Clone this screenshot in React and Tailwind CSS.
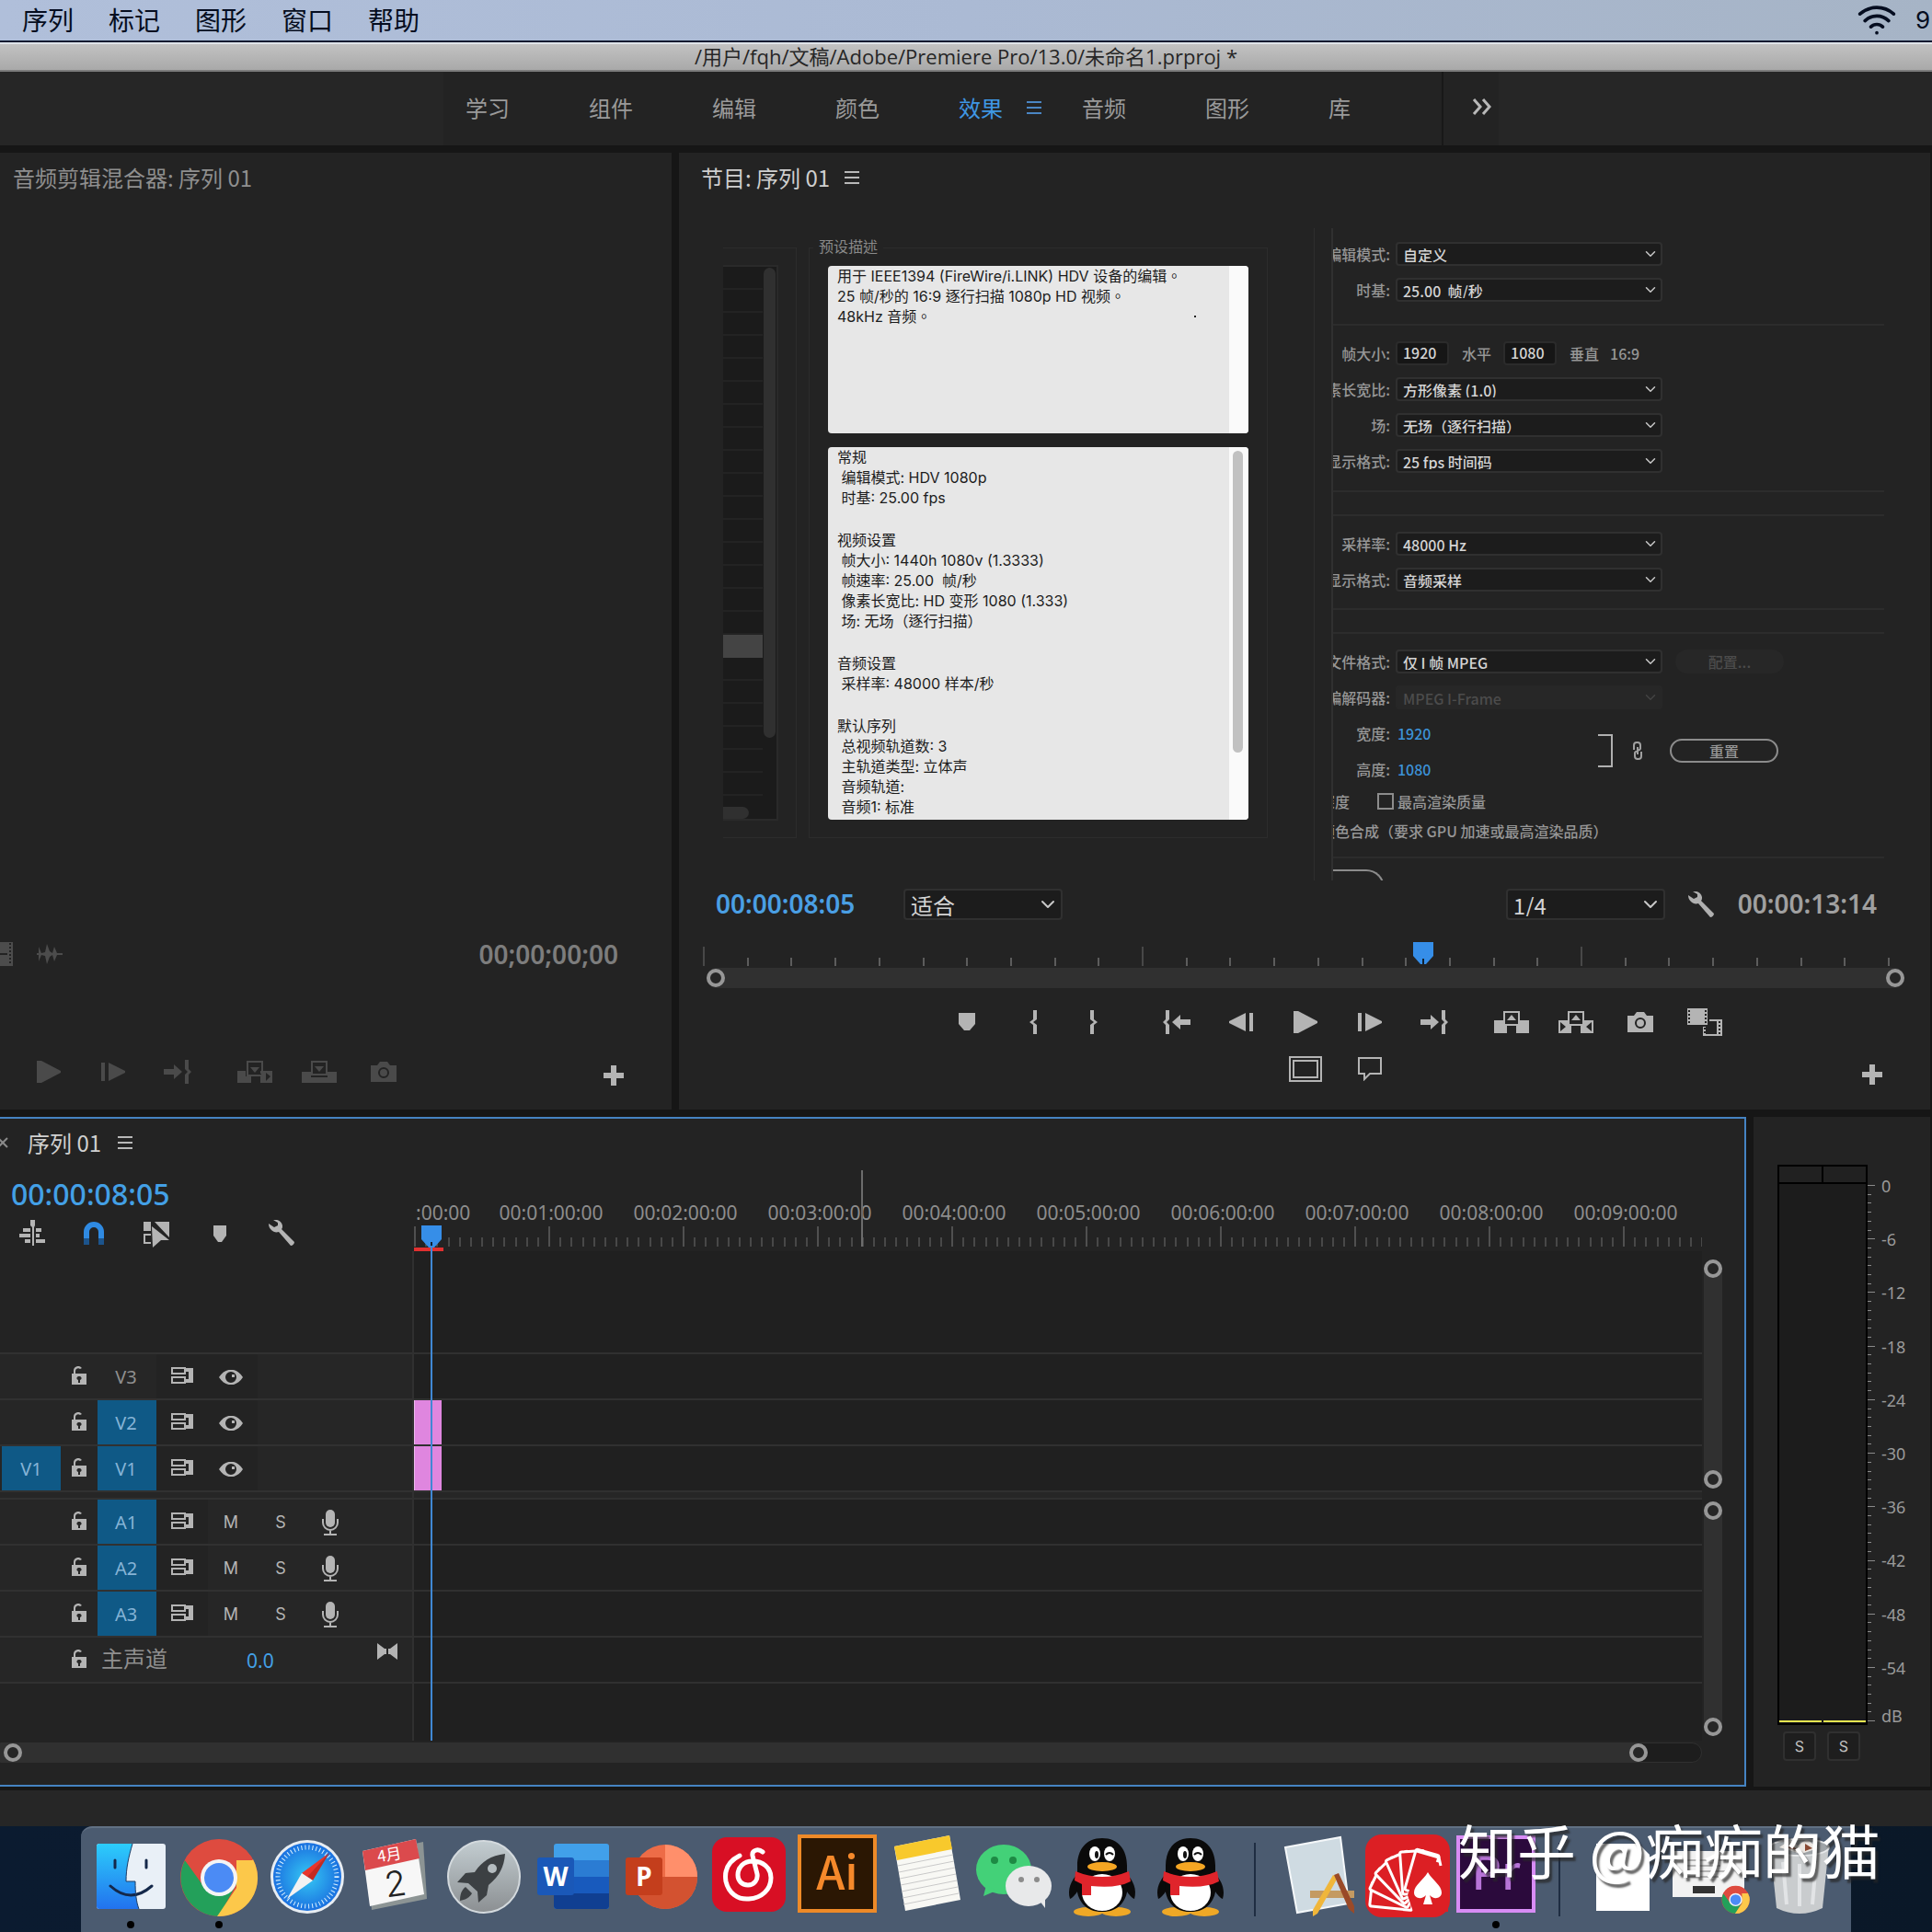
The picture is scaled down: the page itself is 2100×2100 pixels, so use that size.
import { useState } from "react";
import { ChevronDown, Wifi } from "lucide-react";

const menus = ["序列", "标记", "图形", "窗口", "帮助"];
const workspaces = ["学习", "组件", "编辑", "颜色", "效果", "音频", "图形", "库"];

const presetInfo = [
  "常规",
  " 编辑模式: HDV 1080p",
  " 时基: 25.00 fps",
  "",
  "视频设置",
  " 帧大小: 1440h 1080v (1.3333)",
  " 帧速率: 25.00  帧/秒",
  " 像素长宽比: HD 变形 1080 (1.333)",
  " 场: 无场（逐行扫描）",
  "",
  "音频设置",
  " 采样率: 48000 样本/秒",
  "",
  "默认序列",
  " 总视频轨道数: 3",
  " 主轨道类型: 立体声",
  " 音频轨道:",
  " 音频1: 标准",
];

/* ---------- small shared pieces ---------- */

function Svg({ w, h, children, className = "" }) {
  return (
    <svg width={w} height={h} viewBox={`0 0 ${w} ${h}`} fill="currentColor" className={`block shrink-0 ${className}`} aria-hidden="true">
      {children}
    </svg>
  );
}

function MenuLines({ className = "" }) {
  return (
    <Svg w={16} h={16} className={className}>
      <path d="M0 1h16v2H0zM0 7h16v2H0zM0 13h16v2H0z" />
    </Svg>
  );
}

function Plus() {
  return (
    <button type="button" aria-label="添加按钮" className="text-[#b4b4b4]">
      <Svg w={22} h={22}>
        <path d="M8 0h6v8h8v6h-8v8H8v-8H0V8h8z" />
      </Svg>
    </button>
  );
}

function Ring() {
  return <span className="block size-5 shrink-0 rounded-full border-4 border-[#979797] bg-[#262626]" />;
}

function Wrench() {
  return (
    <Svg w={28} h={28}>
      <path d="M5 0c4-1 9 1 10 6 0 2 0 3-1 4l14 14c0 2-2 4-4 4L11 13c-3 1-6 0-8-2C1 9 0 7 0 4l6 4 4-2 0-3z" />
    </Svg>
  );
}

function Marker() {
  return (
    <Svg w={18} h={20}>
      <path d="M0 0h18v12l-6 7H6L0 12z" />
    </Svg>
  );
}

function Playhead() {
  return (
    <Svg w={22} h={24} className="text-[#368ee8]">
      <path d="M0 0h22v15l-8 9H8L0 15z" />
      <path d="M10 18h2v6h-2z" fill="#102030" />
    </Svg>
  );
}

function Play() {
  return (
    <Svg w={26} h={24}>
      <path d="M0 0h5l21 11v2L5 24H0z" />
    </Svg>
  );
}

function StepForward() {
  return (
    <Svg w={26} h={20}>
      <path d="M0 0h4v20H0zM8 0l18 9v2L8 20z" />
    </Svg>
  );
}

function StepBack() {
  return (
    <Svg w={26} h={20}>
      <path d="M22 0h4v20h-4zM18 0L0 9v2l18 9z" />
    </Svg>
  );
}

function BraceOpen() {
  return (
    <Svg w={10} h={26}>
      <path d="M4 0h4v10l-4 3 4 3v10H4V16L0 13l4-3z" />
    </Svg>
  );
}

function BraceClose() {
  return (
    <Svg w={10} h={26}>
      <path d="M2 0h4v10l4 3-4 3v10H2V16l4-3-4-3z" />
    </Svg>
  );
}

function GoIn() {
  return (
    <Svg w={30} h={26}>
      <path d="M3 0h4v10l-3 3 3 3v10H3V16l-3-3 3-3zM10 13l9-8v5h11v6H19v5z" />
    </Svg>
  );
}

function GoOut() {
  return (
    <Svg w={30} h={26}>
      <path d="M23 0h4v10l3 3-3 3v10h-4V16l3-3-3-3zM20 13l-9-8v5H0v6h11v5z" />
    </Svg>
  );
}

function Camera() {
  return (
    <Svg w={28} h={22}>
      <path fillRule="evenodd" d="M0 4h7l3-4h8l3 4h7v18H0zM14 6a6 6 0 1 0 0 12 6 6 0 0 0 0-12zM14 8a4 4 0 1 1 0 8 4 4 0 0 1 0-8z" />
    </Svg>
  );
}

function Insert() {
  return (
    <Svg w={38} h={24}>
      <path d="M0 11h9v6h6v7H0zM25 11h13v13H25v-7h3v-3h-3z" />
      <path d="M11 1h16v15H11z" fill="none" stroke="currentColor" strokeWidth="2" />
      <path d="M14 7h10l-5 6z" />
      <path d="M31 13l5 4-5 5z" fill="#232323" />
    </Svg>
  );
}

function Overwrite() {
  return (
    <Svg w={38} h={24}>
      <path d="M0 12h10v6h18v-6h10v12H0z" />
      <path d="M11 1h16v14H11z" fill="none" stroke="currentColor" strokeWidth="2" />
      <path d="M14 6h10l-5 6z" />
    </Svg>
  );
}

function Lift() {
  return (
    <Svg w={38} h={24}>
      <path d="M0 10h10v6h4v8H0zM28 10h10v14H24v-8h4z" />
      <path d="M11 1h16v14H11z" fill="none" stroke="currentColor" strokeWidth="2" />
      <path d="M14 10h10l-5-6z" />
    </Svg>
  );
}

function Extract() {
  return (
    <Svg w={38} h={24}>
      <path d="M0 10h10v6h4v8H0zM28 10h10v14H24v-8h4z" />
      <path d="M11 1h16v14H11z" fill="none" stroke="currentColor" strokeWidth="2" />
      <path d="M14 10h10l-5-6z" />
      <path d="M2 12l6 5-6 5zM36 12l-6 5 6 5z" fill="#232323" />
    </Svg>
  );
}

function Compare() {
  return (
    <Svg w={38} h={30}>
      <path d="M0 0h22v18H0z" />
      <path d="M2 2v15M20 2v15" stroke="#232323" strokeWidth="2" strokeDasharray="2 2" />
      <path d="M17 20h3v8h12V14h-8v-2h14v18H17z" />
      <path d="M35 14v15M19 21v8" stroke="#232323" strokeWidth="2" strokeDasharray="2 2" />
    </Svg>
  );
}

function SafeMargins() {
  return (
    <Svg w={36} h={28}>
      <path d="M1 1h34v26H1zM5 5h26v18H5z" fill="none" stroke="currentColor" strokeWidth="2" />
    </Svg>
  );
}

function Comment() {
  return (
    <Svg w={26} h={26}>
      <path d="M1 1h24v17H13l-6 6v-6H1z" fill="none" stroke="currentColor" strokeWidth="2" />
    </Svg>
  );
}

function IconButton({ label, children, className = "" }) {
  return (
    <button type="button" aria-label={label} className={`flex h-10 w-[70px] shrink-0 items-center justify-center ${className}`}>
      {children}
    </button>
  );
}

function Dropdown({ label, value, className = "", size = 18, disabled = false }) {
  return (
    <span className={`relative block shrink-0 ${className}`}>
      <select
        aria-label={label}
        disabled={disabled}
        className="h-full w-full appearance-none rounded-sm border-2 border-[#303030] bg-[#1c1c1c] pb-0.5 pl-1.5 text-[#d4d4d4] disabled:border-[#272727] disabled:bg-[#272727] disabled:text-[#4c4c4c]"
      >
        <option>{value}</option>
      </select>
      <ChevronDown
        size={size}
        className={disabled ? "pointer-events-none absolute top-1/2 right-1 -translate-y-1/2 text-[#444]" : "pointer-events-none absolute top-1/2 right-1 -translate-y-1/2 text-[#c8c8c8]"}
      />
    </span>
  );
}

/* ---------- top bars ---------- */

function TopBars() {
  const [active, setActive] = useState("效果");
  return (
    <header>
      <div className="flex h-[46px] items-center justify-between overflow-hidden border-b-2 border-[#0d1a30] bg-linear-to-r from-[#b0bfda] via-[#abbad4] to-[#a6b4c6] pb-0.5 pl-6 text-[28px] text-[#050d20]">
        <nav className="flex gap-[38px]">
          {menus.map((m) => (
            <button type="button" key={m}>{m}</button>
          ))}
        </nav>
        <div className="flex w-[82px] shrink-0 items-center gap-5">
          <Wifi size={44} className="shrink-0" />
          <span className="font-['Inter','Noto_Sans_CJK_SC',sans-serif] text-[26px]">9</span>
        </div>
      </div>
      <div className="flex h-8 items-center justify-center border-t-2 border-b-2 border-t-[#dfe3e8] border-b-[#7c7c7c] bg-linear-to-b from-[#c2c2c2] to-[#a9a9a9] pb-0.5 text-[22px] text-[#262626]">
        <h1 className="font-['Open_Sans','Noto_Sans_CJK_SC',sans-serif]">/用户/fqh/文稿/Adobe/Premiere Pro/13.0/未命名1.prproj *</h1>
      </div>
      <div className="flex h-20 bg-[#262626] pl-[482px] text-2xl text-[#9a9a9a]">
        <nav className="flex w-[1087px] items-center overflow-hidden border-r-2 border-[#181818] bg-[#232323] pb-0.5 pl-6">
          {workspaces.map((name) => (
            <button
              type="button"
              key={name}
              onClick={() => setActive(name)}
              className={name === active ? "flex w-[134px] shrink-0 items-center gap-[26px] text-[#3f97e4]" : "flex w-[134px] shrink-0 items-center"}
            >
              {name}
              {name === active && <MenuLines className="text-[#4a86c4]" />}
            </button>
          ))}
        </nav>
        <button type="button" aria-label="更多工作区" className="flex w-[60px] items-center justify-center bg-[#232323] pb-1 pl-6 text-[#b8b8b8]">
          <Svg w={22} h={18}>
            <path d="M2 1l7 8-7 8M12 1l7 8-7 8" fill="none" stroke="currentColor" strokeWidth="3" />
          </Svg>
        </button>
      </div>
    </header>
  );
}

/* ---------- audio clip mixer ---------- */

function MixerPanel() {
  return (
    <section className="flex w-[730px] shrink-0 flex-col bg-[#232323]">
      <h2 className="flex h-14 items-center pb-0.5 pl-3.5 text-2xl text-[#8f8f8f]">音频剪辑混合器: 序列 01</h2>
      <div className="mt-auto flex h-10 items-center pb-0.5 text-[#4c4c4c]">
        <Svg w={14} h={26}>
          <path d="M0 0h14v26H0z" />
          <path d="M11 1v24" stroke="#232323" strokeWidth="2" strokeDasharray="2 2" />
          <path d="M0 12h8v2H0z" fill="#232323" />
        </Svg>
        <Svg w={28} h={22} className="ml-[26px]">
          <path d="M0 10h2V3l3 7 4-1 2-9 3 8 3 2 2-7 3 7h6v2h-6l-3 7-2-7-3 2-3 8-2-9-4-1-3 7v-7H0z" />
        </Svg>
        <span className="mr-[58px] ml-auto font-['Noto_Sans',sans-serif] text-[28px] font-semibold text-[#7d7d7d]">00;00;00;00</span>
      </div>
      <div className="mt-[87px] mb-[21px] flex h-10 items-center pr-[52px] pl-[18px] text-[#4a4a4a]">
        <IconButton label="播放"><Play /></IconButton>
        <IconButton label="前进一帧"><StepForward /></IconButton>
        <IconButton label="转到出点"><GoOut /></IconButton>
        <IconButton label="插入" className="ml-3.5"><Insert /></IconButton>
        <IconButton label="覆盖"><Overwrite /></IconButton>
        <IconButton label="导出帧"><Camera /></IconButton>
        <div className="mt-3 ml-auto"><Plus /></div>
      </div>
    </section>
  );
}

/* ---------- program monitor ---------- */

function PresetPicture() {
  return (
    <div className="flex pt-[9px]">
      <div className="mt-3 h-[642px] w-20 border-y border-r border-[#2c2c2c] pt-[18px]">
        <div className="relative h-[604px] w-[60px] border-y-2 border-r-2 border-[#2a2a2a] bg-[#1b1b1b]">
          {Array.from({ length: 23 }, (_, i) => (
            <div key={i} className={i === 16 ? "h-[25px] w-[43px] bg-[#444]" : "h-[25px] w-[43px] border-b-2 border-[#232323]"} />
          ))}
          <div className="absolute top-px right-px h-[511px] w-[13px] rounded-full bg-[#303030]" />
          <div className="absolute bottom-0 left-0 h-[13px] w-[28px] rounded-r-full bg-[#303030]" />
        </div>
      </div>
      <fieldset className="ml-[13px] w-[499px] border border-[#2c2c2c] px-5 pb-[19px] font-['Inter','Noto_Sans_CJK_TC',sans-serif] text-base leading-[22px] text-[#1c1c1c]">
        <legend className="-ml-4 h-6 px-1.5 text-[#8a8a8a]">预设描述</legend>
        <div className="mt-2 flex h-[182px] justify-between overflow-hidden rounded-sm bg-[#e7e7e7]">
          <p className="pl-2.5 whitespace-pre">{"用于 IEEE1394 (FireWire/i.LINK) HDV 设备的编辑。\n25 帧/秒的 16:9 逐行扫描 1080p HD 视频。\n48kHz 音频。"}</p>
          <span className="mt-[54px] mr-9 ml-auto size-0.5 bg-[#222]" />
          <span className="w-[21px] bg-[#fafafa]" />
        </div>
        <div className="mt-[15px] flex h-[405px] justify-between overflow-hidden rounded-sm bg-[#e7e7e7]">
          <div className="pl-2.5">
            {presetInfo.map((line, i) => (
              <p key={i} className={line ? "h-[22px] whitespace-pre" : "h-6"}>{line}</p>
            ))}
          </div>
          <span className="w-[21px] bg-[#fafafa] pt-1 pl-1">
            <span className="block h-[328px] w-[11px] rounded-full bg-[#c1c1c1]" />
          </span>
        </div>
      </fieldset>
    </div>
  );
}

function FormRow({ label, children }) {
  return (
    <div className="flex h-[39px] items-center gap-1.5">
      <span className="flex w-[62px] shrink-0 justify-end overflow-hidden whitespace-nowrap">{label}</span>
      {children}
    </div>
  );
}

function SelectRow({ label, value, disabled, children }) {
  return (
    <FormRow label={label}>
      <Dropdown label={label} value={value} disabled={disabled} className="h-[26px] w-[290px]" />
      {children}
    </FormRow>
  );
}

function SequencePicture() {
  return (
    <div className="ml-[50px] flex h-[709px] min-w-0 flex-1 border-l border-[#2e2e2e] pl-[18px] text-base font-medium text-[#969696]">
      <form className="min-w-0 flex-1 overflow-hidden border-l-2 border-[#303030] pt-2">
        <SelectRow label="编辑模式:" value="自定义" />
        <SelectRow label="时基:" value={"25.00\u00a0 帧/秒"} />
        <hr className="mt-[18px] mb-2.5 border-t-2 border-[#2c2c2c]" />
        <FormRow label="帧大小:">
          <input aria-label="水平" defaultValue="1920" className="h-[26px] w-[58px] rounded-sm border-2 border-[#2b2b2b] bg-[#161616] px-1.5 pb-0.5 text-[#d4d4d4]" />
          <span className="ml-2">水平</span>
          <input aria-label="垂直" defaultValue="1080" className="ml-[7px] h-[26px] w-[58px] rounded-sm border-2 border-[#2b2b2b] bg-[#161616] px-1.5 pb-0.5 text-[#d4d4d4]" />
          <span className="ml-2">垂直</span>
          <span className="ml-1.5">16:9</span>
        </FormRow>
        <SelectRow label="素长宽比:" value="方形像素 (1.0)" />
        <SelectRow label="场:" value="无场（逐行扫描）" />
        <SelectRow label="显示格式:" value="25 fps 时间码" />
        <hr className="mt-[13px] mb-6 border-t-2 border-[#2c2c2c]" />
        <hr className="mb-2.5 border-t-2 border-[#2c2c2c]" />
        <SelectRow label="采样率:" value="48000 Hz" />
        <SelectRow label="显示格式:" value="音频采样" />
        <hr className="mt-3 mb-6 border-t-2 border-[#2c2c2c]" />
        <hr className="mb-2.5 border-t-2 border-[#2c2c2c]" />
        <SelectRow label="文件格式:" value="仅 I 帧 MPEG">
          <button type="button" disabled className="ml-2 h-[26px] w-[118px] rounded-full bg-[#272727] leading-[22px] text-[#4c4c4c]">配置...</button>
        </SelectRow>
        <SelectRow label="编解码器:" value="MPEG I-Frame" disabled />
        <div className="flex items-center">
          <div className="w-[288px]">
            <FormRow label="宽度:">
              <span className="pl-0.5 text-[#3c92d8]">1920</span>
            </FormRow>
            <FormRow label="高度:">
              <span className="pl-0.5 text-[#3c92d8]">1080</span>
            </FormRow>
          </div>
          <span className="h-9 w-4 border-y-2 border-r-2 border-[#b0b0b0]" />
          <Svg w={10} h={20} className="ml-[22px] text-[#a0a0a0]">
            <path d="M1 9V4a3 3 0 0 1 3-3h1a3 3 0 0 1 3 3v3a2 2 0 0 1-3 2M9 11v5a3 3 0 0 1-3 3H5a3 3 0 0 1-3-3v-3a2 2 0 0 1 3-2M5 6v8" fill="none" stroke="currentColor" strokeWidth="2" />
          </Svg>
          <button type="button" className="ml-[30px] h-[26px] w-[118px] rounded-full border-2 border-[#8c8c8c] leading-5">重置</button>
        </div>
        <div className="flex h-8 items-center">
          <span className="-ml-3.5 w-[62px]">深度</span>
          <label className="flex items-center gap-1">
            <input type="checkbox" className="size-[18px] appearance-none border-2 border-[#8c8c8c]" />
            最高渲染质量
          </label>
        </div>
        <p className="-ml-3.5 flex h-8 items-center whitespace-nowrap">颜色合成（要求 GPU 加速或最高渲染品质）</p>
        <hr className="mt-3 mb-3 border-t-2 border-[#2c2c2c]" />
        <div className="h-8 w-14 rounded-tr-[20px] border-t-2 border-r-2 border-[#8c8c8c]" />
      </form>
    </div>
  );
}

function ProgramPanel() {
  return (
    <section className="flex min-w-0 flex-1 flex-col bg-[#232323] pb-6">
      <div className="flex h-14 items-center gap-4 pb-0.5 pl-6 text-2xl text-[#cfcfcf]">
        <h2>节目: 序列 01</h2>
        <MenuLines className="text-[#b8b8b8]" />
      </div>
      <div className="mt-[26px] flex items-start pr-[50px] pl-12">
        <PresetPicture />
        <SequencePicture />
      </div>
      <div className="mt-1.5 flex h-10 items-center pr-[58px] pl-10 text-2xl">
        <span className="w-[204px] font-['Noto_Sans',sans-serif] text-[28px] font-semibold text-[#4a9fe4]">00:00:08:05</span>
        <Dropdown label="缩放级别" value="适合" size={24} className="h-[34px] w-[173px]" />
        <Dropdown label="回放分辨率" value="1/4" size={24} className="ml-auto h-[34px] w-[173px]" />
        <button type="button" aria-label="设置" className="ml-[25px] text-[#b0b0b0]"><Wrench /></button>
        <span className="ml-[26px] font-['Noto_Sans',sans-serif] text-[28px] font-semibold text-[#a0a0a0]">00:00:13:14</span>
      </div>
      <div className="relative mt-[21px] mr-[44px] ml-[26px] flex h-[26px] items-end justify-between">
        {Array.from({ length: 28 }, (_, i) => (
          <span key={i} className={i % 10 === 0 ? "h-[21px] w-0.5 bg-[#484848]" : "h-[9px] w-0.5 bg-[#5c5c5c]"} />
        ))}
        <span className="absolute top-0 left-[60%] -ml-0.5"><Playhead /></span>
      </div>
      <div className="mt-0.5 mr-[28px] ml-[30px] flex h-[22px] items-center justify-between rounded-full bg-[#303030]">
        <Ring />
        <Ring />
      </div>
      <div className="mt-[17px] flex pl-[278px] text-[#b4b4b4]">
        <IconButton label="添加标记"><Marker /></IconButton>
        <IconButton label="标记入点" className="pl-1.5"><BraceOpen /></IconButton>
        <IconButton label="标记出点" className="pr-1.5"><BraceClose /></IconButton>
        <IconButton label="转到入点" className="ml-[18px]"><GoIn /></IconButton>
        <IconButton label="后退一帧"><StepBack /></IconButton>
        <IconButton label="播放"><Play /></IconButton>
        <IconButton label="前进一帧"><StepForward /></IconButton>
        <IconButton label="转到出点"><GoOut /></IconButton>
        <IconButton label="提升" className="ml-3.5"><Lift /></IconButton>
        <IconButton label="提取"><Extract /></IconButton>
        <IconButton label="导出帧"><Camera /></IconButton>
        <IconButton label="比较视图"><Compare /></IconButton>
      </div>
      <div className="mt-[11px] flex h-10 items-center pr-[52px] pl-[646px] text-[#b4b4b4]">
        <IconButton label="安全边距"><SafeMargins /></IconButton>
        <IconButton label="注释"><Comment /></IconButton>
        <div className="mt-4 ml-auto"><Plus /></div>
      </div>
    </section>
  );
}

/* ---------- timeline ---------- */

function Lock() {
  return (
    <Svg w={16} h={20}>
      <path fillRule="evenodd" d="M0 8h2V5a5 5 0 0 1 9-3l-2 1a3 3 0 0 0-5 2v3h12v12H0zM8 11a2 2 0 0 0-1 4v3h2v-3a2 2 0 0 0-1-4z" />
    </Svg>
  );
}

function SyncLock() {
  return (
    <Svg w={24} h={18}>
      <path d="M1 1h14v6H1zM1 11h14v6H1z" fill="none" stroke="currentColor" strokeWidth="2" />
      <path d="M16 1h8v16h-8v-4h3V5h-3z" />
    </Svg>
  );
}

function EyeIcon() {
  return (
    <Svg w={26} h={16}>
      <path fillRule="evenodd" d="M0 8c7-11 19-11 26 0-7 11-19 11-26 0zM13 2a6 6 0 1 0 0 12 6 6 0 0 0 0-12zM14 5h3v3h-3z" />
    </Svg>
  );
}

function Mic() {
  return (
    <Svg w={18} h={28}>
      <rect x="4" y="0" width="10" height="19" rx="5" />
      <path d="M1 10v4a8 8 0 0 0 16 0v-4M9 22v4M2 27h14" fill="none" stroke="currentColor" strokeWidth="2" />
    </Svg>
  );
}

function TrackHeader({ name, source, targeted, audio }) {
  return (
    <div className="flex h-[50px] items-center border-t-2 border-[#313131] bg-[#262626] font-['Noto_Sans',sans-serif] text-[#b4b4b4]">
      <div className="flex w-[68px] self-stretch pl-0.5">
        {source && <button type="button" className="w-16 bg-[#0f5986] pt-0.5 text-xl text-[#86b4d6]">{source}</button>}
      </div>
      <button type="button" aria-label="切换轨道锁定" className="flex w-[38px] justify-center pr-0.5 pb-0.5"><Lock /></button>
      <button type="button" className={targeted ? "w-16 self-stretch bg-[#0f5986] pt-0.5 pr-0.5 text-xl text-[#86b4d6]" : "w-16 self-stretch pt-0.5 pr-0.5 text-xl text-[#8f8f8f]"}>{name}</button>
      <div className="flex items-center self-stretch bg-[#232323]">
        <button type="button" aria-label="切换同步锁定" className="flex w-[56px] justify-center pb-0.5"><SyncLock /></button>
        {!audio && <button type="button" aria-label="切换轨道输出" className="flex w-[54px] justify-center pt-0.5 pr-1"><EyeIcon /></button>}
      </div>
      {audio && (
        <div className="flex items-center pt-0.5 font-['Inter',sans-serif] text-lg">
          <button type="button" aria-label="静音轨道" className="w-[50px]">M</button>
          <button type="button" aria-label="独奏轨道" className="w-[58px]">S</button>
          <button type="button" aria-label="画外音录制" className="flex w-[50px] justify-center"><Mic /></button>
        </div>
      )}
    </div>
  );
}

function Lane({ clip }) {
  return (
    <div className="h-[50px] border-t-2 border-[#303030]">
      {clip && <div className="h-full w-[30px] border-l border-[#eeb8ee] bg-[#df86df]" />}
    </div>
  );
}

function Tracks() {
  return (
    <div className="w-[450px] shrink-0">
      <p className="flex h-14 items-center pl-3 font-['Noto_Sans',sans-serif] text-[32px] font-medium text-[#43a0e6]">00:00:08:05</p>
      <div className="flex h-[34px] items-start text-[#b4b4b4]">
        <button type="button" aria-label="嵌套序列" className="flex w-[70px] justify-center">
          <Svg w={28} h={28}>
            <path d="M12 0h5v6l-1 2v20h-2V8l-2-2zM4 9h8v4H4zM18 9h6v4h-6zM0 15h12v4H0zM18 15h4v4h-4zM6 21h6v4H6zM18 21h10v4H18z" />
          </Svg>
        </button>
        <button type="button" aria-label="对齐" className="flex w-16 justify-center pt-0.5">
          <Svg w={22} h={26} className="text-[#2f8ae2]">
            <path d="M0 18v-7a11 11 0 0 1 22 0v7h-6v-7a5 5 0 0 0-10 0v7z" />
            <path d="M0 18h6v7H0zM16 18h6v7h-6z" fill="#1c548c" />
          </Svg>
        </button>
        <button type="button" aria-label="链接选择项" className="flex w-[72px] justify-center pt-0.5">
          <Svg w={28} h={28}>
            <path d="M0 0h8v10H0zM12 0h16v17z M9 5l19 15h-9l-9 8z" />
            <path d="M8 14H1v9h7" fill="none" stroke="currentColor" strokeWidth="2" />
          </Svg>
        </button>
        <button type="button" aria-label="添加标记" className="flex w-[66px] justify-center pt-1.5">
          <Svg w={14} h={18}>
            <path d="M0 0h14v11l-5 7H5l-5-7z" />
          </Svg>
        </button>
        <button type="button" aria-label="时间轴显示设置" className="flex w-[68px] justify-center"><Wrench /></button>
      </div>
      <div className="border-r-2 border-[#303030]">
        <div className="h-[110px]" />
        <TrackHeader name="V3" />
        <TrackHeader name="V2" targeted />
        <TrackHeader name="V1" source="V1" targeted />
        <div className="h-2 border-t-2 border-[#313131] bg-[#262626]" />
        <TrackHeader name="A1" targeted audio />
        <TrackHeader name="A2" targeted audio />
        <TrackHeader name="A3" targeted audio />
        <div className="flex h-[50px] items-center border-t-2 border-[#313131] bg-[#262626] pl-[68px] text-[#b4b4b4]">
          <button type="button" aria-label="切换轨道锁定" className="flex w-[38px] justify-center pr-0.5 pb-0.5"><Lock /></button>
          <span className="w-40 pb-1 pl-1 text-2xl text-[#8f8f8f]">主声道</span>
          <span className="w-36 pt-1 pl-0.5 font-['Noto_Sans',sans-serif] text-[21px] text-[#43a0e6]">0.0</span>
          <Svg w={22} h={18} className="mb-[18px]">
            <path d="M0 0l8 6h2v6H8l-8 6zM22 0l-8 6h-2v6h2l8 6z" />
          </Svg>
        </div>
        <div className="h-16 border-t-2 border-[#313131]" />
      </div>
    </div>
  );
}

function Lanes() {
  return (
    <div className="relative min-w-0 flex-1 overflow-hidden">
      <div className="flex h-[63px] items-end pb-0.5 pl-0.5 text-center font-['Noto_Sans',sans-serif] text-[21px] leading-[26px] text-[#8d8d8d]">
        <span className="w-[74px] shrink-0 text-left">:00:00</span>
        {Array.from({ length: 9 }, (_, i) => (
          <span key={i} className="w-[146px] shrink-0">00:0{i + 1}:00:00</span>
        ))}
      </div>
      <div className="flex h-[27px]">
        {Array.from({ length: 10 }, (_, m) => (
          <div key={m} className="grid h-[22px] w-[146px] shrink-0 grid-cols-12 items-end">
            {Array.from({ length: 12 }, (_, i) => (
              <span key={i} className={i === 0 ? "h-[22px] w-0.5 bg-[#505050]" : "h-2.5 w-0.5 bg-[#484848]"} />
            ))}
          </div>
        ))}
      </div>
      <div className="bg-[#202020]">
        <div className="h-[110px]" />
        <Lane />
        <Lane clip />
        <Lane clip />
        <div className="h-2 border-t-2 border-[#303030] bg-[#262626]" />
        <Lane />
        <Lane />
        <Lane />
        <Lane />
        <div className="h-16 border-t-2 border-[#303030]" />
      </div>
      <span className="absolute top-0.5 left-[486px] h-[83px] w-0.5 bg-[#6c6c6c]" />
      <span className="absolute top-[86px] left-0 h-1 w-8 bg-[#e23030]" />
      <span className="absolute top-[62px] left-2"><Playhead /></span>
      <span className="absolute top-[84px] bottom-0 left-[18px] w-0.5 bg-[#4088d4]" />
    </div>
  );
}

function TimelinePanel() {
  return (
    <section className="flex min-w-0 flex-1 flex-col border-y-2 border-r-2 border-[#4583c2] bg-[#232323]">
      <div className="flex h-[54px] items-center pb-0.5 text-2xl text-[#d0d0d0]">
        <button type="button" aria-label="关闭" className="w-[30px] text-[#8a8a8a]">
          <Svg w={9} h={12}>
            <path d="M-2 1l10 10M8 1L-2 11" stroke="currentColor" strokeWidth="2" />
          </Svg>
        </button>
        <h2 className="mr-[18px]">序列 01</h2>
        <MenuLines className="text-[#b8b8b8]" />
      </div>
      <div className="flex">
        <Tracks />
        <Lanes />
        <div className="mr-6 ml-0.5 flex w-5 flex-col gap-3.5 pt-[99px]">
          <div className="flex h-[249px] flex-col justify-between rounded-full bg-[#303030]"><Ring /><Ring /></div>
          <div className="flex h-[255px] flex-col justify-between rounded-full bg-[#303030]"><Ring /><Ring /></div>
        </div>
      </div>
      <div className="mt-0.5 mr-[46px] mb-6 flex h-[22px] rounded-r-full border border-[#303030] bg-[#1d1d1d]">
        <div className="flex w-[1790px] items-center justify-between rounded-r-full bg-[#303030] pl-[3px]"><Ring /><Ring /></div>
      </div>
    </section>
  );
}

/* ---------- audio meters ---------- */

function MeterPanel() {
  return (
    <section className="mr-0.5 w-48 shrink-0 bg-[#232323] pt-[52px] pl-[26px]">
      <div className="flex">
        <div className="grid h-[609px] w-[98px] grid-cols-2 grid-rows-[19px_1fr] border-2 border-black bg-[#1c1c1c]">
          <span className="border-r border-b-2 border-black bg-[#212121]" />
          <span className="border-b-2 border-l border-black bg-[#212121]" />
          <span className="mr-px mb-px border-b-2 border-[#e6e650]" />
          <span className="mb-px ml-px border-b-2 border-[#e6e650]" />
        </div>
        <div className="mt-[22px] flex h-[584px] w-[15px] flex-col justify-between">
          {Array.from({ length: 61 }, (_, i) => (
            <span key={i} className={i % 6 === 0 ? "h-px w-2 bg-[#8a8a8a]" : "h-px w-1 bg-[#8a8a8a]"} />
          ))}
        </div>
        <div className="mt-3 flex h-[576px] flex-col font-['Noto_Sans',sans-serif] text-lg leading-[22px] text-[#9a9a9a]">
          {["0", "-6", "-12", "-18", "-24", "-30", "-36", "-42", "-48", "-54"].map((db) => (
            <span key={db} className="flex-1">{db}</span>
          ))}
          <span className="-mt-1.5 h-0">dB</span>
        </div>
      </div>
      <div className="mt-[7px] ml-1.5 flex gap-3">
        <button type="button" aria-label="独奏左声道" className="h-8 w-9 rounded-sm border-2 border-[#303030] bg-[#1e1e1e] font-['Inter',sans-serif] text-base text-[#c0c0c0]">S</button>
        <button type="button" aria-label="独奏右声道" className="h-8 w-9 rounded-sm border-2 border-[#303030] bg-[#1e1e1e] font-['Inter',sans-serif] text-base text-[#c0c0c0]">S</button>
      </div>
    </section>
  );
}

/* ---------- dock ---------- */

function DockItem({ label, running, children }) {
  return (
    <button type="button" aria-label={label} className="flex h-full w-24 shrink-0 flex-col items-center pt-[7px]">
      <svg width="92" height="92" viewBox="0 0 92 92" aria-hidden="true">{children}</svg>
      {running && <span className="mt-0.5 size-2 rounded-full bg-black" />}
    </button>
  );
}

function Penguin() {
  return (
    <g>
      <ellipse cx="31" cy="84" rx="16" ry="5" fill="#efa826" />
      <ellipse cx="61" cy="84" rx="16" ry="5" fill="#efa826" />
      <path d="M20 42C12 50 8 60 11 70c3-1 6-5 8-8M72 42c8 8 12 18 9 28-3-1-6-5-8-8" fill="#0a0a0a" />
      <path d="M46 4c-18 0-27 13-27 30v10c-4 24 6 40 27 40s31-16 27-40V34C73 17 64 4 46 4z" fill="#0a0a0a" />
      <ellipse cx="46" cy="63" rx="22" ry="20" fill="#fff" />
      <ellipse cx="38" cy="21" rx="6" ry="8" fill="#fff" />
      <ellipse cx="54" cy="21" rx="6" ry="8" fill="#fff" />
      <ellipse cx="40" cy="22" rx="2" ry="4" fill="#111" />
      <path d="M50 22q4-4 8 0" fill="none" stroke="#111" strokeWidth="2" />
      <ellipse cx="46" cy="35" rx="16" ry="5" fill="#f5a623" />
      <path d="M17 40q29 12 58 0l2 11q-15 8-43 5v10H24V54l-8-4z" fill="#e0242b" />
    </g>
  );
}

function ChromeMark() {
  return (
    <g>
      <circle cx="46" cy="47" r="42" fill="#de4b3f" />
      <path d="M9 28A42 42 0 0 0 46 89l20-37H28z" fill="#23a05a" />
      <path d="M83 27A42 42 0 0 1 44 89l21-31 0-31z" fill="#fcc84a" />
      <path d="M9 28a42 42 0 0 1 74 0H46L29 56z" fill="#de4b3f" />
      <circle cx="46" cy="47" r="20" fill="#f5f5f5" />
      <circle cx="46" cy="47" r="16" fill="#4b8bf5" />
    </g>
  );
}

function Dock() {
  return (
    <footer className="relative h-[115px] overflow-hidden bg-linear-to-r from-[#0b1b30] to-[#0a1828] pr-[88px] pl-[88px]">
      <div className="flex h-full rounded-tl-xl border-t-2 border-[#617083] bg-[#4b5b70] pl-1.5">
        <DockItem label="访达" running>
          <defs>
            <linearGradient id="finder" x1="0" y1="0" x2="0" y2="1"><stop offset="0" stopColor="#2ccdfb" /><stop offset="1" stopColor="#2272ee" /></linearGradient>
          </defs>
          <rect x="9" y="10" width="75" height="71" rx="3" fill="#e9f0f7" />
          <path d="M12 10h36c-4 14-7 26-7 41h10c0 12 1 22 4 30H12a3 3 0 0 1-3-3V13a3 3 0 0 1 3-3z" fill="url(#finder)" />
          <path d="M29 28v8M63 28v8M24 56q22 20 45 0" fill="none" stroke="#14284a" strokeWidth="3" strokeLinecap="round" />
          <path d="M48 10c-4 14-7 26-7 41h10c0 12 1 22 4 30" fill="none" stroke="#1c3c66" strokeWidth="1" />
        </DockItem>
        <DockItem label="Chrome" running><ChromeMark /></DockItem>
        <DockItem label="Safari">
          <defs>
            <radialGradient id="safari"><stop offset="0" stopColor="#35c8f4" /><stop offset="1" stopColor="#1b71e0" /></radialGradient>
          </defs>
          <circle cx="46" cy="46" r="40" fill="#e8edf2" />
          <circle cx="46" cy="46" r="37" fill="url(#safari)" />
          <circle cx="46" cy="46" r="32" fill="none" stroke="#d8f0ff" strokeWidth="5" strokeDasharray="1 3" />
          <path d="M70 20L40 42l6 5z" fill="#e8352c" />
          <path d="M70 20L52 50l-6-4z" fill="#c42a22" />
          <path d="M24 70l16-28 12 8z" fill="#f2f2f2" />
        </DockItem>
        <DockItem label="日历">
          <path d="M14 22l62-14 4 62-60 12z" fill="#8c9494" />
          <path d="M10 18l58-13 9 60-59 13z" fill="#f7f7f7" />
          <path d="M10 18l58-13 4 21-59 13z" fill="#db4a4d" />
          <text x="40" y="28" fontSize="17" fill="#fff" textAnchor="middle" transform="rotate(-10 40 26)">4月</text>
          <text x="46" y="67" fontSize="38" fill="#222" textAnchor="middle" fontFamily="Inter" fontWeight="300" transform="rotate(-8 46 56)">2</text>
        </DockItem>
        <DockItem label="启动台">
          <defs>
            <linearGradient id="launch" x1="0" y1="0" x2="0" y2="1"><stop offset="0" stopColor="#c3cdd1" /><stop offset="1" stopColor="#8b8f92" /></linearGradient>
          </defs>
          <circle cx="46" cy="46" r="39" fill="url(#launch)" stroke="#d4dade" strokeWidth="2" />
          <path d="M69 21c-16 2-26 9-33 20l-10 1-9 10 12 1 10 9 1 12 9-8 2-11c11-9 17-19 18-34z" fill="#3c4043" />
          <path d="M26 57c-5 4-6 9-6 15 6-1 10-3 13-8z" fill="#3c4043" />
          <circle cx="55" cy="37" r="5" fill="#b5bcc0" />
        </DockItem>
        <DockItem label="Word">
          <rect x="26" y="10" width="60" height="71" rx="3" fill="#41a0ea" />
          <path d="M26 28h60v18H26z" fill="#2b7cd3" />
          <path d="M26 46h60v18H26z" fill="#185abd" />
          <path d="M26 64h60v14a3 3 0 0 1-3 3H29a3 3 0 0 1-3-3z" fill="#103f91" />
          <rect x="8" y="25" width="40" height="41" rx="3" fill="#1a58b8" />
          <text x="28" y="56" fontSize="28" fontWeight="700" fill="#fff" textAnchor="middle" fontFamily="Noto Sans">W</text>
        </DockItem>
        <DockItem label="PowerPoint">
          <circle cx="51" cy="46" r="35" fill="#ed6c47" />
          <path d="M51 11a35 35 0 0 1 35 35H51z" fill="#ff8f6b" />
          <path d="M16 46a35 35 0 0 0 70 0z" fill="#d35230" />
          <rect x="8" y="25" width="40" height="41" rx="3" fill="#c43e1c" />
          <text x="28" y="56" fontSize="28" fontWeight="700" fill="#fff" textAnchor="middle" fontFamily="Noto Sans">P</text>
        </DockItem>
        <DockItem label="网易云音乐">
          <rect x="6" y="3" width="80" height="81" rx="16" fill="#d80f24" />
          <path d="M36 23c-12 6-17 16-15 28 3 13 13 20 25 19 14-1 24-10 24-23 0-11-9-18-20-18-10 0-16 7-16 15 0 6 4 11 11 11s11-6 10-12l-5-20c-1-6 6-8 11-4" fill="none" stroke="#fff" strokeWidth="5" strokeLinecap="round" />
        </DockItem>
        <DockItem label="Illustrator">
          <rect x="5" y="2" width="82" height="81" fill="#2b1703" stroke="#ee8a28" strokeWidth="4" />
          <text x="46" y="60" fontSize="50" fill="#f5892b" textAnchor="middle" fontFamily="Noto Sans CJK SC" fontWeight="500">Ai</text>
        </DockItem>
        <DockItem label="备忘录">
          <path d="M12 13l60-12 12 70-60 12z" fill="#f8f8f4" />
          <path d="M12 13l60-12 3 15-60 12z" fill="#f8c92c" />
          {[0, 1, 2, 3, 4, 5, 6].map((i) => (
            <path key={i} d={`M${16 + i} ${34 + i * 7}l60-12`} stroke="#c9c9c9" strokeWidth="1" />
          ))}
        </DockItem>
        <DockItem label="微信">
          <ellipse cx="35" cy="38" rx="30" ry="27" fill="#43d178" />
          <path d="M16 55l-3 12 14-6z" fill="#43d178" />
          <circle cx="25" cy="28" r="4" fill="#1d8a44" />
          <circle cx="45" cy="28" r="4" fill="#1d8a44" />
          <ellipse cx="62" cy="56" rx="25" ry="22" fill="#e8e9ea" />
          <path d="M74 72l6 8 0-14z" fill="#e8e9ea" />
          <circle cx="54" cy="49" r="3" fill="#8c8c8c" />
          <circle cx="71" cy="49" r="3" fill="#8c8c8c" />
        </DockItem>
        <DockItem label="QQ"><Penguin /></DockItem>
        <DockItem label="QQ"><Penguin /></DockItem>
        <span className="mx-[21px] mt-4 h-20 w-0.5 shrink-0 bg-[#1f2d42]" />
        <DockItem label="应用程序">
          <path d="M9 14l60-11 9 72-56 10z" fill="#cfdbe2" stroke="#f5f8fa" strokeWidth="2" />
          <path d="M36 61h48v8H36z" fill="#c49a62" />
          <path d="M61 44l5 3-22 39-5 3 0-7z" fill="#f0b63a" />
          <path d="M62 44l5-2 17 36 0 8-6-5z" fill="#9a4a28" />
        </DockItem>
        <DockItem label="纸牌">
          <rect x="0" y="0" width="92" height="90" rx="18" fill="#dc1f24" />
          {[-84, -64, -44, -24, -4, 16].map((deg) => (
            <rect key={deg} x="41" y="18" width="26" height="46" rx="2" fill="#dc1f24" stroke="#fff" strokeWidth="3" transform={`rotate(${deg} 56 68)`} />
          ))}
          <path d="M46 66L60 24l30 10v50H52z" fill="#dc1f24" />
          <path d="M56 18l24 7 2 9" fill="none" stroke="#fff" strokeWidth="3" />
          <path d="M68 41c-5 9-15 14-15 22 0 7 9 8 13 3l-3 10h10l-3-10c4 5 13 4 13-3 0-8-10-13-15-22z" fill="#fff" />
        </DockItem>
        <DockItem label="Premiere Pro" running>
          <rect x="5" y="3" width="82" height="80" fill="#2b0a3c" stroke="#d88cf5" strokeWidth="4" />
          <text x="46" y="60" fontSize="50" fill="#b874d8" textAnchor="middle" fontFamily="Noto Sans CJK SC" fontWeight="500">Pr</text>
        </DockItem>
        <span className="mx-5 mt-4 h-20 w-0.5 shrink-0 bg-[#1f2d42]" />
        <DockItem label="文稿">
          <path d="M17 10h46l12 12v61H17z" fill="#fff" />
        </DockItem>
        <DockItem label="窗口">
          <rect x="4" y="18" width="78" height="50" fill="#f2f2f2" />
          <path d="M20 28h42M20 34h36M20 40h42M20 46h34" stroke="#b5b5b5" strokeWidth="2" />
          <rect x="26" y="56" width="24" height="8" fill="#333" />
          <g transform="translate(56 54) scale(.36)"><ChromeMark /></g>
        </DockItem>
        <DockItem label="废纸篓">
          <path d="M14 12h64l-7 68q-25 12-50 0z" fill="#c9ccce" />
          <ellipse cx="46" cy="14" rx="32" ry="9" fill="#9fa4a8" stroke="#e6e8ea" strokeWidth="2" />
          <path d="M24 14l12-8 8 6 10-7 12 10-18 6z" fill="#ece7e2" />
          <path d="M30 14l8-2 6 5zM52 10l8 5-8 3z" fill="#8a4a34" />
          <path d="M28 30l4 46M46 32v46M64 30l-4 46" stroke="#e2e4e6" strokeWidth="4" />
        </DockItem>
      </div>
    </footer>
  );
}

export default function App() {
  return (
    <div className="relative flex min-h-screen w-full flex-col overflow-hidden bg-[#161616] font-['Noto_Sans_CJK_SC',sans-serif]">
      <TopBars />
      <main className="flex flex-1 flex-col pt-2">
        <div className="flex flex-1 gap-2 pr-0.5">
          <MixerPanel />
          <ProgramPanel />
        </div>
        <div className="mt-2 flex gap-2">
          <TimelinePanel />
          <MeterPanel />
        </div>
      </main>
      <div className="mt-1 h-[39px] bg-[#262626]" />
      <Dock />
      <p className="pointer-events-none absolute right-[56px] bottom-[46px] text-[64px] leading-[90px] whitespace-nowrap text-white [text-shadow:3px_4px_2px_rgba(40,40,40,0.7)]">知乎 @痴痴的猫</p>
    </div>
  );
}
